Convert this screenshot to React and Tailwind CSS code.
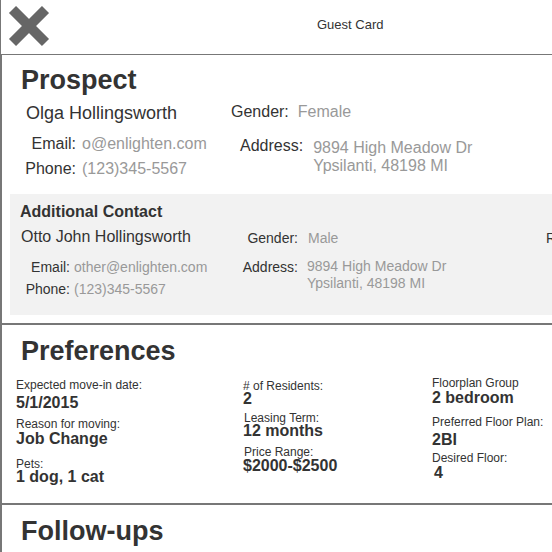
import React from 'react';

// Guest card wireframe: header, prospect + additional contact, preferences, follow-ups
const CloseIcon = () => (
  <svg width="42" height="42" viewBox="0 0 42 42" className="block">
    <line x1="4.5" y1="4.5" x2="37.5" y2="37.5" stroke="#666" strokeWidth="10" strokeLinecap="butt" />
    <line x1="37.5" y1="4.5" x2="4.5" y2="37.5" stroke="#666" strokeWidth="10" strokeLinecap="butt" />
  </svg>
);

const PrefLabel = ({ children, className = '' }) => (
  <div className={`text-[12px] leading-[11px] text-[#333] whitespace-nowrap ${className}`}>{children}</div>
);

const PrefValue = ({ children, className = '' }) => (
  <div className={`text-[16px] leading-[13px] font-bold text-[#333] whitespace-nowrap ${className}`}>{children}</div>
);

export default function App() {
  return (
    <div className="w-[552px] h-[552px] overflow-hidden bg-white text-[#333] font-[family-name:Liberation_Sans,Arial,sans-serif]">
      {/* Header */}
      <div className="h-[55px] box-border border-l border-b border-[#777] flex items-start">
        <div className="ml-[7px] mt-[5px]">
          <CloseIcon />
        </div>
        <div className="ml-[267px] mt-[17px] text-[13px] leading-[16px] text-[#333]">Guest Card</div>
      </div>

      <div className="border-l-2 border-[#777]">
        {/* Prospect */}
        <div className="h-[270px] box-border border-b-2 border-[#777] overflow-hidden">
          <h2 className="ml-[19px] mt-[9px] text-[27px] leading-[32px] font-bold">Prospect</h2>

          <div className="flex items-start mt-[5px] whitespace-nowrap">
            <div className="w-[229px] shrink-0 pl-[24px] text-[18px] leading-[24px]">Olga Hollingsworth</div>
            <div className="-mt-px flex text-[16px] leading-[24px]">
              <span>Gender:</span>
              <span className="ml-[9px] text-[#999]">Female</span>
            </div>
          </div>

          <div className="flex items-start mt-[6px] text-[16px] whitespace-nowrap">
            <div className="w-[238px] shrink-0 leading-[25px]">
              <div className="flex">
                <span className="w-[74px] text-right">Email:</span>
                <span className="ml-[6px] text-[#999]">o@enlighten.com</span>
              </div>
              <div className="flex">
                <span className="w-[74px] text-right">Phone:</span>
                <span className="ml-[6px] text-[#999]">(123)345-5567</span>
              </div>
            </div>
            <div className="flex items-start">
              <span className="mt-[2px] leading-[25px]">Address:</span>
              <div className="ml-[10px] mt-[8px] leading-[18px] text-[#999]">
                <div>9894 High Meadow Dr</div>
                <div>Ypsilanti, 48198 MI</div>
              </div>
            </div>
          </div>

          {/* Additional contact */}
          <div className="ml-[8px] mt-[13px] h-[121px] bg-[#f2f2f2] pt-[8px] overflow-hidden">
            <div className="pl-[10px] text-[16px] leading-[20px] font-bold">Additional Contact</div>
            <div className="flex items-start mt-[5px] whitespace-nowrap">
              <div className="w-[227px] shrink-0 pl-[11px] text-[16px] leading-[20px]">Otto John Hollingsworth</div>
              <div className="w-[309px] shrink-0 mt-[1px] flex text-[14px] leading-[20px]">
                <span className="w-[61px] text-right">Gender:</span>
                <span className="ml-[10px] text-[#999]">Male</span>
              </div>
              <div className="shrink-0 mt-[1px] text-[14px] leading-[20px]">Relationship:</div>
            </div>
            <div className="flex items-start mt-[8px] text-[14px] whitespace-nowrap">
              <div className="w-[227px] shrink-0 leading-[22px]">
                <div className="flex">
                  <span className="w-[60px] text-right">Email:</span>
                  <span className="ml-[4px] text-[#999]">other@enlighten.com</span>
                </div>
                <div className="flex">
                  <span className="w-[60px] text-right">Phone:</span>
                  <span className="ml-[4px] text-[#999]">(123)345-5567</span>
                </div>
              </div>
              <div className="flex items-start">
                <span className="w-[61px] text-right leading-[22px]">Address:</span>
                <div className="ml-[9px] mt-[2px] leading-[16.5px] text-[#999]">
                  <div>9894 High Meadow Dr</div>
                  <div>Ypsilanti, 48198 MI</div>
                </div>
              </div>
            </div>
          </div>
        </div>

        {/* Preferences */}
        <div className="h-[180px] box-border border-b-2 border-[#777] overflow-hidden">
          <h2 className="ml-[19px] mt-[10px] text-[27px] leading-[32px] font-bold">Preferences</h2>
          <div className="flex items-start mt-[11px]">
            <div className="w-[241px] shrink-0 pl-[14px] pt-[2px]">
              <PrefLabel>Expected move-in date:</PrefLabel>
              <PrefValue className="mt-[5px]">5/1/2015</PrefValue>
              <PrefLabel className="mt-[10px]">Reason for moving:</PrefLabel>
              <PrefValue className="mt-[2px]">Job Change</PrefValue>
              <PrefLabel className="mt-[14px]">Pets:</PrefLabel>
              <PrefValue>1 dog, 1 cat</PrefValue>
            </div>
            <div className="w-[189px] shrink-0 pt-[3px]">
              <PrefLabel>&#35; of Residents:</PrefLabel>
              <PrefValue>2</PrefValue>
              <PrefLabel className="mt-[8px] ml-px">Leasing Term:</PrefLabel>
              <PrefValue>12 months</PrefValue>
              <PrefLabel className="mt-[10px] ml-px">Price Range:</PrefLabel>
              <PrefValue className="mt-px">$2000-$2500</PrefValue>
            </div>
            <div>
              <PrefLabel>Floorplan Group</PrefLabel>
              <PrefValue className="mt-[2px]">2 bedroom</PrefValue>
              <PrefLabel className="mt-[13px]">Preferred Floor Plan:</PrefLabel>
              <PrefValue className="mt-[5px]">2BI</PrefValue>
              <PrefLabel className="mt-[7px]">Desired Floor:</PrefLabel>
              <PrefValue className="mt-[2px] ml-[2px]">4</PrefValue>
            </div>
          </div>
        </div>

        {/* Follow-ups */}
        <div className="h-[47px] overflow-hidden">
          <h2 className="ml-[19px] mt-[10px] text-[27px] leading-[32px] font-bold">Follow-ups</h2>
        </div>
      </div>
    </div>
  );
}
